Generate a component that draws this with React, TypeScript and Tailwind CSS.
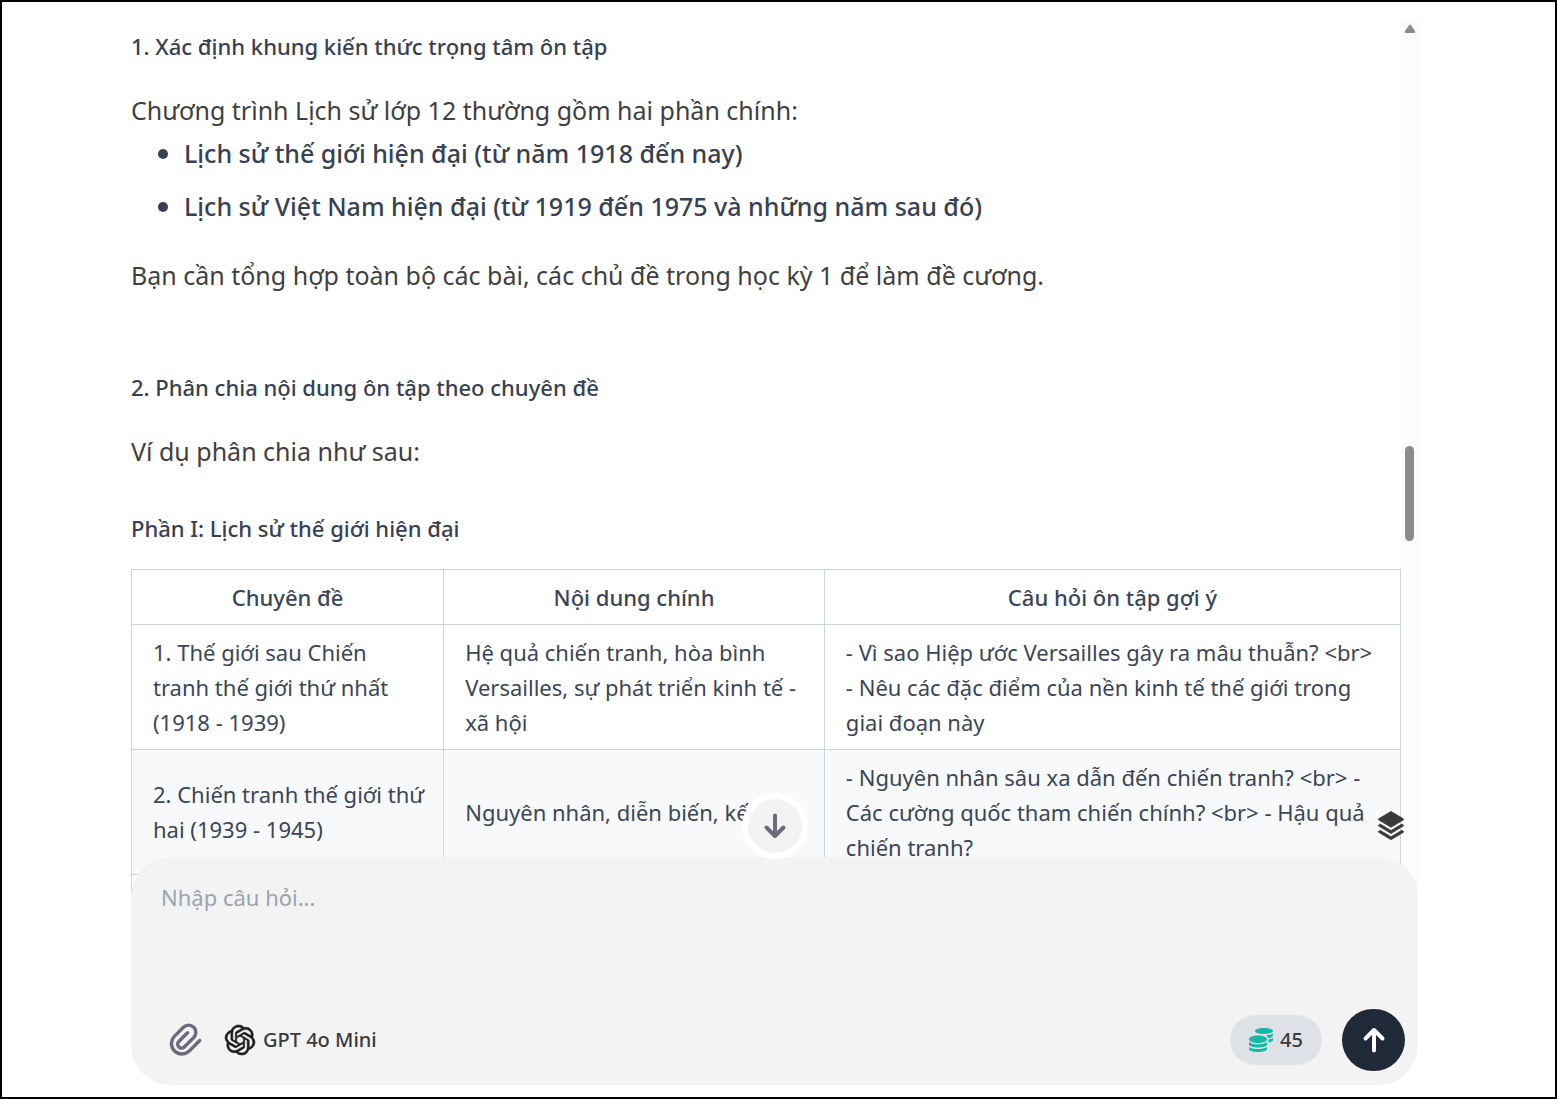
import type { ReactNode } from "react";
import { FaCoins } from "react-icons/fa";
import { RiStackFill } from "react-icons/ri";
import { SiOpenai } from "react-icons/si";

const eras = [
  "Lịch sử thế giới hiện đại (từ năm 1918 đến nay)",
  "Lịch sử Việt Nam hiện đại (từ 1919 đến 1975 và những năm sau đó)",
];

const columns = [
  { label: "Chuyên đề", width: "w-[24.6%]" },
  { label: "Nội dung chính", width: "w-[30%]" },
  { label: "Câu hỏi ôn tập gợi ý", width: "w-[45.4%]" },
];

const rows = [
  [
    "1. Thế giới sau Chiến tranh thế giới thứ nhất (1918 - 1939)",
    "Hệ quả chiến tranh, hòa bình Versailles, sự phát triển kinh tế - xã hội",
    "- Vì sao Hiệp ước Versailles gây ra mâu thuẫn? <br> - Nêu các đặc điểm của nền kinh tế thế giới trong giai đoạn này",
  ],
  [
    "2. Chiến tranh thế giới thứ hai (1939 - 1945)",
    "Nguyên nhân, diễn biến, kết quả",
    "- Nguyên nhân sâu xa dẫn đến chiến tranh? <br> - Các cường quốc tham chiến chính? <br> - Hậu quả chiến tranh?",
  ],
  ["", "", ""],
];

function Heading({ children }: { children: ReactNode }) {
  return <h3 className="text-[22px] leading-8 font-medium text-[#374151]">{children}</h3>;
}

function Paragraph({ children }: { children: ReactNode }) {
  return <p className="text-[25px] leading-10 text-[#3f3f3f]">{children}</p>;
}

function TopicTable() {
  return (
    <table className="w-full table-fixed border-collapse text-[22px] leading-[35px] text-[#3b4656]">
      <thead>
        <tr>
          {columns.map((column) => (
            <th
              key={column.label}
              className={`${column.width} border border-[#cbd5e0] px-[22px] pt-[10px] pb-[9px] font-medium`}
            >
              {column.label}
            </th>
          ))}
        </tr>
      </thead>
      <tbody>
        {rows.map((cells, i) => (
          <tr key={i} className="h-[125px] even:bg-[#f7f9fb]">
            {cells.map((cell, j) => (
              <td key={j} className="border border-[#cbd5e0] py-[9px] pr-[17px] pl-[21px]">
                {cell}
              </td>
            ))}
          </tr>
        ))}
      </tbody>
    </table>
  );
}

function Scrollbar() {
  return (
    <div className="relative w-[17px] shrink-0 bg-[#fcfcfc]">
      <svg viewBox="0 0 12 9" className="mx-auto mt-1 h-[9px] w-3 fill-[#8b8b8b]" aria-hidden="true">
        <path d="M5 1.2Q6 0 7 1.2L11 7Q11.8 8.5 10.5 9H1.5Q.2 8.5 1 7Z" />
      </svg>
      <div className="absolute top-[426px] left-1 h-[95px] w-[9px] rounded-full bg-[#8b8b8b]" />
    </div>
  );
}

function ClipIcon() {
  return (
    <svg
      viewBox="0 0 24 24"
      className="size-[34px] fill-none stroke-current stroke-[2.4]"
      strokeLinecap="round"
      strokeLinejoin="round"
      aria-hidden="true"
    >
      <path d="m22.4 12.4-7.6 7.6a7.4 7.4 0 0 1-10.500-10.400l6.600-6.600a5.100 5.100 0 0 1 7.300 7.200l-6.700 6.700a2.700 2.700 0 0 1-3.900-3.800l6.200-6.200" />
    </svg>
  );
}

function ArrowIcon({ down = false }: { down?: boolean }) {
  return (
    <svg
      viewBox="0 0 28 28"
      className={`size-7 fill-none stroke-current stroke-4 ${down ? "rotate-180" : ""}`}
      strokeLinecap="round"
      strokeLinejoin="round"
      aria-hidden="true"
    >
      <path d="M14 24.500V4M5.500 12.500 14 4l8.500 8.500" />
    </svg>
  );
}

function Composer() {
  return (
    <form
      className="relative -mt-10 rounded-[40px] bg-[#f3f3f3] pt-[19px] pr-[13px] pb-[14px] pl-[30px]"
      onSubmit={(e) => e.preventDefault()}
    >
      <button
        type="button"
        aria-label="Cuộn xuống cuối"
        className="absolute -top-16 left-1/2 flex size-[66px] -translate-x-1/2 items-center justify-center rounded-full border-[6px] border-white bg-[#f3f3f3] text-[#6b6b7b]"
      >
        <ArrowIcon down />
      </button>
      <button type="button" aria-label="Mục lục" className="absolute -top-[47px] right-[11px] text-[#3a3a3a]">
        <RiStackFill className="size-8 stroke-current stroke-[0.5]" />
      </button>
      <textarea
        aria-label="Nhập câu hỏi"
        placeholder="Nhập câu hỏi..."
        className="block h-[133px] w-full resize-none bg-transparent text-[22px] leading-[42px] text-[#3a3a3a] outline-none placeholder:text-[#9ca3af]"
      />
      <div className="flex items-center justify-between">
        <div className="flex items-center">
          <button type="button" aria-label="Đính kèm tệp" className="mx-[7px] text-[#6b6b7b]">
            <ClipIcon />
          </button>
          <button type="button" className="ml-4 flex items-center gap-2 text-xl font-medium text-[#3a3a3a]">
            <SiOpenai className="size-[30px] overflow-visible stroke-current stroke-[0.5] text-[#1c1c1c]" />
            GPT 4o Mini
          </button>
        </div>
        <div className="flex items-center gap-5">
          <div className="flex h-[50px] w-[92px] items-center justify-center gap-[7px] rounded-full bg-[#dee2e6] text-xl font-medium text-[#3a3a3a]">
            <FaCoins className="size-6 text-[#14b8a6]" />
            45
          </div>
          <button
            type="submit"
            aria-label="Gửi"
            className="flex h-[62px] w-[63px] items-center justify-center rounded-full bg-[#1f2937] text-white"
          >
            <ArrowIcon />
          </button>
        </div>
      </div>
    </form>
  );
}

export default function App() {
  return (
    <main className="flex h-screen flex-col overflow-hidden border-2 border-black bg-white pt-[18px] pr-[137px] pb-3 pl-[129px] font-['Noto_Sans','Open_Sans',sans-serif]">
      <div className="flex min-h-0 flex-1">
        <div className="min-w-0 flex-1 overflow-hidden pt-[10px]">
          <Heading>1. Xác định khung kiến thức trọng tâm ôn tập</Heading>
          <div className="mt-7">
            <Paragraph>Chương trình Lịch sử lớp 12 thường gồm hai phần chính:</Paragraph>
          </div>
          <ul className="mt-[3px] ml-[27px] flex flex-col gap-[13px]">
            {eras.map((era) => (
              <li
                key={era}
                className="flex items-center gap-4 text-[25px] leading-10 font-medium text-[#374151] before:mt-[2px] before:size-[10px] before:shrink-0 before:rounded-full before:bg-[#374151] before:content-['']"
              >
                {era}
              </li>
            ))}
          </ul>
          <div className="mt-[29px]">
            <Paragraph>Bạn cần tổng hợp toàn bộ các bài, các chủ đề trong học kỳ 1 để làm đề cương.</Paragraph>
          </div>
          <div className="mt-[76px]">
            <Heading>2. Phân chia nội dung ôn tập theo chuyên đề</Heading>
          </div>
          <div className="mt-7 mb-[41px]">
            <Paragraph>Ví dụ phân chia như sau:</Paragraph>
          </div>
          <div className="mb-[25px]">
            <Heading>Phần I: Lịch sử thế giới hiện đại</Heading>
          </div>
          <TopicTable />
        </div>
        <Scrollbar />
      </div>
      <Composer />
    </main>
  );
}
